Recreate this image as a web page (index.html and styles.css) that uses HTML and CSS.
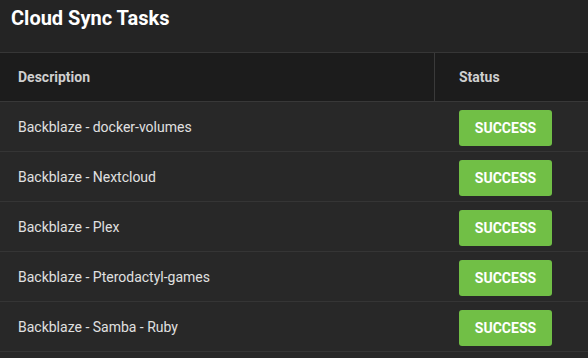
FILE: index.html
```html
<!DOCTYPE html>
<html>
<head>
  <meta charset="UTF-8">
  <title>Cloud Sync Tasks</title>
  <link rel="stylesheet" href="styles.css">
</head>
<body>
  <div class="card">
    <div class="cardTitle">Cloud Sync Tasks</div>

    <div class="tableRow headRow">
      <div class="cell descCell">Description</div>
      <div class="cell statusCell">Status</div>
    </div>

    <div class="tableRow">
      <div class="cell descCell">Backblaze - docker-volumes</div>
      <div class="cell statusCell"><span class="badge">SUCCESS</span></div>
    </div>
    <div class="tableRow">
      <div class="cell descCell">Backblaze - Nextcloud</div>
      <div class="cell statusCell"><span class="badge">SUCCESS</span></div>
    </div>
    <div class="tableRow">
      <div class="cell descCell">Backblaze - Plex</div>
      <div class="cell statusCell"><span class="badge">SUCCESS</span></div>
    </div>
    <div class="tableRow">
      <div class="cell descCell">Backblaze - Pterodactyl-games</div>
      <div class="cell statusCell"><span class="badge">SUCCESS</span></div>
    </div>
    <div class="tableRow">
      <div class="cell descCell">Backblaze - Samba - Ruby</div>
      <div class="cell statusCell"><span class="badge">SUCCESS</span></div>
    </div>
  </div>
</body>
</html>
```

FILE: styles.css
```css
body {
  margin: 0;
  background-color: #282828;
  font-family: Roboto, "Liberation Sans", Arial, sans-serif;
  color: #e0e0e0;
}

.card {
  background-color: #282828;
  min-height: 358px;
}

.cardTitle {
  height: 53px;
  box-sizing: border-box;
  padding: 4px 11px 0px 11px;
  line-height: 28px;
  font-size: 20px;
  font-weight: bold;
  color: #ffffff;
  background-color: #242424;
  border-bottom: 1px solid #363636;
}

.tableRow {
  display: grid;
  grid-template-columns: 435px 1fr;
  height: 50px;
  box-sizing: border-box;
  border-bottom: 1px solid #353535;
  font-size: 14px;
}

.cell {
  display: flex;
  align-items: center;
}

.descCell {
  padding-left: 18px;
}

.statusCell {
  padding-left: 24px;
  padding-top: 3px;
}

.headRow {
  height: 49px;
  background-color: #1c1c1c;
  border-bottom-color: #383838;
  font-weight: bold;
  color: #cfcfcf;
}

.headRow .statusCell {
  padding-top: 0px;
}

.headRow .descCell {
  border-right: 1px solid #3a3a3a;
}

.badge {
  display: flex;
  align-items: center;
  justify-content: center;
  width: 93px;
  height: 36px;
  border-radius: 3px;
  background-color: #71bf46;
  color: #ffffff;
  font-size: 14px;
  font-weight: bold;
}
```
